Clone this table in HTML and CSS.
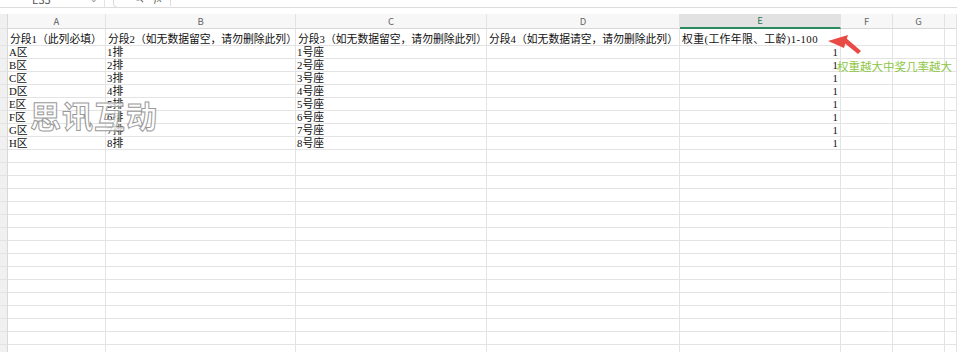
FILE: index.html
```html
<!DOCTYPE html>
<html lang="zh">
<head>
<meta charset="utf-8">
<title>Sheet</title>
<link rel="stylesheet" href="styles.css">
</head>
<body>
<div class="app">
  <div class="topbar">
    <div class="namebox"><span class="nb-text">E35</span><span class="caret">⌄</span></div>
    <div class="fbox">
      <svg class="search" width="10" height="10" viewBox="0 0 10 10"><circle cx="4" cy="4" r="3" fill="none" stroke="#777" stroke-width="1.2"/><line x1="6.2" y1="6.2" x2="9" y2="9" stroke="#777" stroke-width="1.2"/></svg>
      <span class="fx">fx</span>
      <span class="fdiv"></span>
    </div>
  </div>
  <div class="gap"></div>
  <div class="sheet">
    <div class="rh hd"></div>
    <div class="ch">A</div>
    <div class="ch">B</div>
    <div class="ch">C</div>
    <div class="ch">D</div>
    <div class="ch sel">E</div>
    <div class="ch">F</div>
    <div class="ch">G</div>
    <div class="ch"></div>

    <div class="rh"></div>
    <div class="c h1">分段1（此列必填）</div>
    <div class="c h1">分段2（如无数据留空，请勿删除此列）</div>
    <div class="c h1">分段3（如无数据留空，请勿删除此列）</div>
    <div class="c h1">分段4（如无数据请空，请勿删除此列）</div>
    <div class="c h1 wide">权重(工作年限、工龄)1-100</div>
    <div class="c h1"></div>
    <div class="c h1"></div>
    <div class="c h1"></div>

    <div class="rh"></div><div class="c">A区</div><div class="c">1排</div><div class="c">1号座</div><div class="c"></div><div class="c num">1</div><div class="c"></div><div class="c"></div><div class="c"></div>
    <div class="rh"></div><div class="c">B区</div><div class="c">2排</div><div class="c">2号座</div><div class="c"></div><div class="c num">1</div><div class="c"></div><div class="c"></div><div class="c"></div>
    <div class="rh"></div><div class="c">C区</div><div class="c">3排</div><div class="c">3号座</div><div class="c"></div><div class="c num">1</div><div class="c"></div><div class="c"></div><div class="c"></div>
    <div class="rh"></div><div class="c">D区</div><div class="c">4排</div><div class="c">4号座</div><div class="c"></div><div class="c num">1</div><div class="c"></div><div class="c"></div><div class="c"></div>
    <div class="rh"></div><div class="c">E区</div><div class="c">5排</div><div class="c">5号座</div><div class="c"></div><div class="c num">1</div><div class="c"></div><div class="c"></div><div class="c"></div>
    <div class="rh"></div><div class="c">F区</div><div class="c">6排</div><div class="c">6号座</div><div class="c"></div><div class="c num">1</div><div class="c"></div><div class="c"></div><div class="c"></div>
    <div class="rh"></div><div class="c">G区</div><div class="c">7排</div><div class="c">7号座</div><div class="c"></div><div class="c num">1</div><div class="c"></div><div class="c"></div><div class="c"></div>
    <div class="rh"></div><div class="c">H区</div><div class="c">8排</div><div class="c">8号座</div><div class="c"></div><div class="c num">1</div><div class="c"></div><div class="c"></div><div class="c"></div>

    <div class="rh"></div><div class="c"></div><div class="c"></div><div class="c"></div><div class="c"></div><div class="c"></div><div class="c"></div><div class="c"></div><div class="c"></div>
    <div class="rh"></div><div class="c"></div><div class="c"></div><div class="c"></div><div class="c"></div><div class="c"></div><div class="c"></div><div class="c"></div><div class="c"></div>
    <div class="rh"></div><div class="c"></div><div class="c"></div><div class="c"></div><div class="c"></div><div class="c"></div><div class="c"></div><div class="c"></div><div class="c"></div>
    <div class="rh"></div><div class="c"></div><div class="c"></div><div class="c"></div><div class="c"></div><div class="c"></div><div class="c"></div><div class="c"></div><div class="c"></div>
    <div class="rh"></div><div class="c"></div><div class="c"></div><div class="c"></div><div class="c"></div><div class="c"></div><div class="c"></div><div class="c"></div><div class="c"></div>
    <div class="rh"></div><div class="c"></div><div class="c"></div><div class="c"></div><div class="c"></div><div class="c"></div><div class="c"></div><div class="c"></div><div class="c"></div>
    <div class="rh"></div><div class="c"></div><div class="c"></div><div class="c"></div><div class="c"></div><div class="c"></div><div class="c"></div><div class="c"></div><div class="c"></div>
    <div class="rh"></div><div class="c"></div><div class="c"></div><div class="c"></div><div class="c"></div><div class="c"></div><div class="c"></div><div class="c"></div><div class="c"></div>
    <div class="rh"></div><div class="c"></div><div class="c"></div><div class="c"></div><div class="c"></div><div class="c"></div><div class="c"></div><div class="c"></div><div class="c"></div>
    <div class="rh"></div><div class="c"></div><div class="c"></div><div class="c"></div><div class="c"></div><div class="c"></div><div class="c"></div><div class="c"></div><div class="c"></div>
    <div class="rh"></div><div class="c"></div><div class="c"></div><div class="c"></div><div class="c"></div><div class="c"></div><div class="c"></div><div class="c"></div><div class="c"></div>
    <div class="rh"></div><div class="c"></div><div class="c"></div><div class="c"></div><div class="c"></div><div class="c"></div><div class="c"></div><div class="c"></div><div class="c"></div>
    <div class="rh"></div><div class="c"></div><div class="c"></div><div class="c"></div><div class="c"></div><div class="c"></div><div class="c"></div><div class="c"></div><div class="c"></div>
    <div class="rh"></div><div class="c"></div><div class="c"></div><div class="c"></div><div class="c"></div><div class="c"></div><div class="c"></div><div class="c"></div><div class="c"></div>
    <div class="rh"></div><div class="c"></div><div class="c"></div><div class="c"></div><div class="c"></div><div class="c"></div><div class="c"></div><div class="c"></div><div class="c"></div>
    <div class="rh"></div><div class="c"></div><div class="c"></div><div class="c"></div><div class="c"></div><div class="c"></div><div class="c"></div><div class="c"></div><div class="c"></div>
  </div>

  <div class="watermark">思讯互动</div>
  <div class="note">权重越大中奖几率越大</div>
  <svg class="arrow" width="40" height="24" viewBox="0 0 40 24">
    <polygon points="0,7 20,1 16,14" fill="#ea4a45"/>
    <polygon points="14,7 18,4 33,17 30,20" fill="#ea4a45"/>
  </svg>
</div>
</body>
</html>
```

FILE: styles.css
```css
html, body {
  margin: 0;
  padding: 0;
  background: #fff;
  overflow: hidden;
}
.app {
  position: relative;
  width: 957px;
  height: 352px;
  overflow: hidden;
  font-family: "Liberation Serif", "Noto Sans CJK SC", serif;
  color: #111;
}
.topbar {
  height: 8px;
  box-sizing: border-box;
  border-bottom: 1px solid #dcdcdc;
  display: flex;
  align-items: flex-end;
  overflow: hidden;
  background: #fff;
}
.namebox {
  width: 105px;
  height: 14px;
  box-sizing: border-box;
  border-right: 1px solid #e4e4e4;
  display: flex;
  align-items: flex-end;
  justify-content: space-between;
  padding: 0 6px 0 32px;
  margin-bottom: -1px;
  font-family: "Noto Sans CJK SC", sans-serif;
  font-size: 11px;
  color: #555;
  line-height: 10px;
}
.nb-text { margin-bottom: 4px; }
.caret { font-size: 9px; color: #888; margin-bottom: 4px; }
.fbox {
  margin-left: 8px;
  flex: 1;
  height: 16px;
  box-sizing: border-box;
  border: 1px solid #d6d6d6;
  border-radius: 0 0 0 5px;
  border-right: none;
  display: flex;
  align-items: flex-end;
  padding-left: 20px;
  margin-bottom: -1px;
}
.search { margin-bottom: 4px; }
.fx {
  font-family: "Liberation Serif", serif;
  font-style: italic;
  font-size: 11px;
  color: #666;
  margin-left: 10px;
  line-height: 10px;
  margin-bottom: 4px;
}
.fdiv {
  width: 1px;
  height: 10px;
  background: #ddd;
  margin-left: 8px;
  margin-bottom: 1px;
}
.gap { height: 6px; background: #fff; }
.sheet {
  display: grid;
  grid-template-columns: 8px 98px 190px 191px 193px 161px 52px 52px 1fr;
  grid-template-rows: 15px 17px;
  grid-auto-rows: 13px;
}
.sheet > div {
  box-sizing: border-box;
  border-right: 1px solid #e3e3e3;
  border-bottom: 1px solid #e3e3e3;
  white-space: nowrap;
}
.rh {
  background: #f0f0f0;
  border-right-color: #d8d8d8 !important;
}
.ch {
  background: #f7f7f7;
  font-family: "Noto Sans CJK SC", sans-serif;
  font-size: 9.5px;
  line-height: 14px;
  color: #666;
  text-align: center;
  border-bottom-color: #d8d8d8 !important;
}
.ch.sel {
  background: #e2e2e2;
  color: #2a7a55;
  border-bottom: 2px solid #2a8a5c !important;
  line-height: 13px;
}
.c {
  font-size: 10.8px;
  line-height: 12px;
  padding-left: 1px;
  overflow: visible;
}
.c.h1 {
  padding-top: 4px;
  padding-left: 2px;
}
.c.wide {
  letter-spacing: 0.4px;
}
.c.num {
  text-align: right;
  padding-right: 2px;
}
.watermark {
  position: absolute;
  left: 30px;
  top: 95px;
  font-family: "Noto Sans CJK SC", sans-serif;
  font-weight: 700;
  font-size: 31px;
  letter-spacing: 1px;
  line-height: 40px;
  color: rgba(255, 255, 255, 0.75);
  -webkit-text-stroke: 1px #9a9a9a;
}
.note {
  position: absolute;
  left: 837px;
  top: 58px;
  font-family: "Noto Sans CJK SC", sans-serif;
  font-size: 11.5px;
  line-height: 16px;
  color: #8dc63f;
  white-space: nowrap;
}
.arrow {
  position: absolute;
  left: 828px;
  top: 34px;
}
```
